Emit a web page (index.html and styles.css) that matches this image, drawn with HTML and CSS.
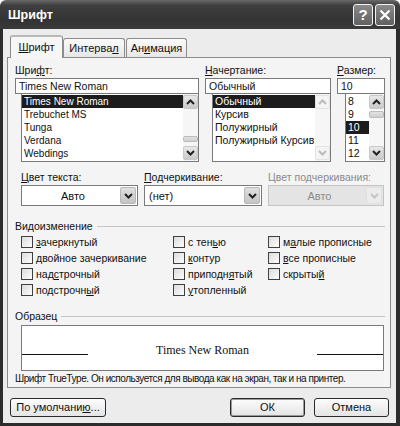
FILE: index.html
```html
<!DOCTYPE html>
<html lang="ru">
<head>
    <meta charset="UTF-8">
    <title>Шрифт</title>
    <link rel="stylesheet" href="styles.css">
</head>
<body>
<div class="window">
    <div class="titlebar">
        <span class="title">Шрифт</span>
        <div class="title-btns">
            <span class="tbtn">?</span>
            <span class="tbtn">
                <svg width="12" height="12" viewBox="0 0 12 12"><path d="M1.5 1.5 L10.5 10.5 M10.5 1.5 L1.5 10.5" stroke="#fff" stroke-width="2.2" fill="none"/></svg>
            </span>
        </div>
    </div>

    <div class="frame">
        <div class="tabs">
            <div class="tab active"><u>Ш</u>рифт</div>
            <div class="tab">Интерва<u>л</u></div>
            <div class="tab tab-last">Ан<u>и</u>мация</div>
        </div>

        <div class="panel">
            <div class="fonts-row">
                <div class="col">
                    <div class="lbl">Шри<u>ф</u>т:</div>
                    <div class="field">Times New Roman</div>
                    <div class="list list-font">
                        <div class="items">
                            <div class="item sel">Times New Roman</div>
                            <div class="item">Trebuchet MS</div>
                            <div class="item">Tunga</div>
                            <div class="item">Verdana</div>
                            <div class="item">Webdings</div>
                        </div>
                        <div class="scroll">
                            <div class="sbtn"><svg width="9" height="6" viewBox="0 0 9 6"><path d="M1 5 L4.5 1.5 L8 5" stroke="#222" stroke-width="2" fill="none"/></svg></div>
                            <div class="track"><div class="thumb thumb-font"></div></div>
                            <div class="sbtn"><svg width="9" height="6" viewBox="0 0 9 6"><path d="M1 1 L4.5 4.5 L8 1" stroke="#222" stroke-width="2" fill="none"/></svg></div>
                        </div>
                    </div>
                </div>
                <div class="col">
                    <div class="lbl"><u>Н</u>ачертание:</div>
                    <div class="field">Обычный</div>
                    <div class="list list-style">
                        <div class="items">
                            <div class="item sel">Обычный</div>
                            <div class="item">Курсив</div>
                            <div class="item">Полужирный</div>
                            <div class="item">Полужирный Курсив</div>
                        </div>
                        <div class="scroll off">
                            <div class="sbtn"><svg width="9" height="6" viewBox="0 0 9 6"><path d="M1 5 L4.5 1.5 L8 5" stroke="#bbb" stroke-width="2" fill="none"/></svg></div>
                            <div class="track"></div>
                            <div class="sbtn"><svg width="9" height="6" viewBox="0 0 9 6"><path d="M1 1 L4.5 4.5 L8 1" stroke="#bbb" stroke-width="2" fill="none"/></svg></div>
                        </div>
                    </div>
                </div>
                <div class="col">
                    <div class="lbl"><u>Р</u>азмер:</div>
                    <div class="field">10</div>
                    <div class="list list-size">
                        <div class="items">
                            <div class="item">8</div>
                            <div class="item">9</div>
                            <div class="item sel">10</div>
                            <div class="item">11</div>
                            <div class="item">12</div>
                        </div>
                        <div class="scroll">
                            <div class="sbtn"><svg width="9" height="6" viewBox="0 0 9 6"><path d="M1 5 L4.5 1.5 L8 5" stroke="#222" stroke-width="2" fill="none"/></svg></div>
                            <div class="track"><div class="thumb thumb-size"></div></div>
                            <div class="sbtn"><svg width="9" height="6" viewBox="0 0 9 6"><path d="M1 1 L4.5 4.5 L8 1" stroke="#222" stroke-width="2" fill="none"/></svg></div>
                        </div>
                    </div>
                </div>
            </div>

            <div class="colors-row">
                <div class="col">
                    <div class="lbl"><u>Ц</u>вет текста:</div>
                    <div class="combo">
                        <span class="combo-text center">Авто</span>
                        <span class="combo-btn"><svg width="9" height="6" viewBox="0 0 9 6"><path d="M1 1 L4.5 4.5 L8 1" stroke="#222" stroke-width="2" fill="none"/></svg></span>
                    </div>
                </div>
                <div class="col">
                    <div class="lbl"><u>П</u>одчеркивание:</div>
                    <div class="combo">
                        <span class="combo-text">(нет)</span>
                        <span class="combo-btn"><svg width="9" height="6" viewBox="0 0 9 6"><path d="M1 1 L4.5 4.5 L8 1" stroke="#222" stroke-width="2" fill="none"/></svg></span>
                    </div>
                </div>
                <div class="col">
                    <div class="lbl dim">Цвет подчеркивания:</div>
                    <div class="combo disabled">
                        <span class="combo-text center">Авто</span>
                        <span class="combo-btn"><svg width="9" height="6" viewBox="0 0 9 6"><path d="M1 1 L4.5 4.5 L8 1" stroke="#c4c4c4" stroke-width="2" fill="none"/></svg></span>
                    </div>
                </div>
            </div>

            <div class="legend legend-effects"><span>Видоизменение</span><i></i></div>
            <div class="checks">
                <label class="chk"><span class="box"></span><span><u>з</u>ачеркнутый</span></label>
                <label class="chk"><span class="box"></span><span>с тен<u>ь</u>ю</span></label>
                <label class="chk"><span class="box"></span><span>м<u>а</u>лые прописные</span></label>
                <label class="chk"><span class="box"></span><span><u>д</u>войное зачеркивание</span></label>
                <label class="chk"><span class="box"></span><span><u>к</u>онтур</span></label>
                <label class="chk"><span class="box"></span><span><u>в</u>се прописные</span></label>
                <label class="chk"><span class="box"></span><span>над<u>с</u>трочный</span></label>
                <label class="chk"><span class="box"></span><span>приподн<u>я</u>тый</span></label>
                <label class="chk"><span class="box"></span><span>скрыты<u>й</u></span></label>
                <label class="chk"><span class="box"></span><span>подстрочн<u>ы</u>й</span></label>
                <label class="chk"><span class="box"></span><span><u>у</u>топленный</span></label>
            </div>

            <div class="legend legend-sample"><span>Образец</span><i></i></div>
            <div class="sample">
                <span class="sample-line"></span>
                <span class="sample-text">Times New Roman</span>
                <span class="sample-line"></span>
            </div>
            <div class="note">Шрифт TrueType. Он используется для вывода как на экран, так и на принтер.</div>
        </div>

        <div class="buttons">
            <div class="btn btn-default-set">По умолчани<u>ю</u>...</div>
            <div class="btn btn-ok">ОК</div>
            <div class="btn">Отмена</div>
        </div>
    </div>
</div>
</body>
</html>
```

FILE: styles.css
```css
* {
    box-sizing: border-box;
}

body {
    margin: 0;
    font-family: "Liberation Sans", Arial, sans-serif;
    font-size: 10.5px;
    color: #111;
    background: #fff;
}

u {
    text-decoration: underline;
    text-underline-offset: 1px;
}

.window {
    width: 400px;
    height: 426px;
    display: flex;
    flex-direction: column;
}

/* title bar */
.titlebar {
    height: 29px;
    flex: none;
    display: flex;
    align-items: center;
    justify-content: space-between;
    padding: 0 5px 0 8px;
    background: linear-gradient(#6a6a6a, #3e3e3e 18%, #333 70%, #3a3a3a);
    border-radius: 6px 6px 0 0;
}

.title {
    color: #fff;
    font-weight: bold;
    font-size: 12.5px;
    padding-top: 1px;
}

.title-btns {
    display: flex;
    gap: 2px;
}

.tbtn {
    width: 20px;
    height: 22px;
    border: 1px solid #f2f2f2;
    border-radius: 3px;
    background: linear-gradient(#8a8a8a, #606060);
    color: #fff;
    font-weight: bold;
    font-size: 15px;
    display: flex;
    align-items: center;
    justify-content: center;
}

/* frame */
.frame {
    flex: 1;
    background: #ececec;
    border-left: 3px solid #2c2c2c;
    border-right: 4px solid #2c2c2c;
    border-bottom: 3px solid #2c2c2c;
    display: flex;
    flex-direction: column;
}

.tabs {
    display: flex;
    align-items: flex-end;
    height: 22px;
    margin-top: 6px;
    padding-left: 7px;
    position: relative;
    z-index: 1;
}

.tab {
    height: 19px;
    width: 62px;
    border: 1px solid #8c8c8c;
    border-bottom: none;
    border-radius: 3px 3px 0 0;
    background: linear-gradient(#fbfbfb, #e6e6e6);
    text-align: center;
    font-size: 11px;
    line-height: 18px;
}

.tab.active {
    height: 23px;
    width: 53px;
    margin-bottom: -1px;
    background: #f6f6f6;
    border-top: 2px solid #b8b8b8;
    line-height: 21px;
}

.tab-last {
    width: 61px;
    margin-left: 1px;
}

.panel {
    height: 331px;
    margin: 0 5px 0 4px;
    border: 1px solid #8c8c8c;
    background: #f4f4f4;
    padding: 5px 5px 0 7px;
}

.lbl {
    height: 14px;
    line-height: 14px;
    margin-bottom: 1px;
}

.dim {
    color: #8a8a8a;
}

/* font lists */
.fonts-row {
    display: grid;
    grid-template-columns: 184px 126px 48px;
    column-gap: 6px;
}

.field {
    height: 16px;
    border: 1px solid #7a7a7a;
    background: #fff;
    padding-left: 3px;
    line-height: 14px;
    font-size: 10.5px;
}

.list {
    height: 68px;
    display: flex;
    border: 1px solid #7a7a7a;
    border-top: none;
    background: #fff;
    font-size: 10.5px;
}

.list-font {
    margin-left: 6px;
}

.list-style {
    margin-left: 7px;
}

.list-size {
    margin-left: 8px;
}

.items {
    flex: 1;
    padding-top: 1px;
}

.item {
    height: 13px;
    line-height: 13px;
    padding-left: 2px;
    white-space: nowrap;
}

.list-font .item {
    font-size: 10px;
}

.item.sel {
    background: #1c1c1c;
    color: #fff;
}

.scroll {
    width: 15px;
    display: flex;
    flex-direction: column;
    padding: 1px 0;
    background: #f6f6f6;
}

.sbtn {
    height: 14px;
    border: 1px solid #c8c8c8;
    border-radius: 2px;
    background: linear-gradient(#e8e8e8, #c9c9c9);
    display: flex;
    align-items: center;
    justify-content: center;
}

.scroll.off .sbtn {
    background: #f4f4f4;
    border-color: #e2e2e2;
}

.track {
    flex: 1;
    display: flex;
    flex-direction: column;
}

.thumb {
    height: 6px;
    border: 1px solid #bcbcbc;
    border-radius: 2px;
    background: linear-gradient(#e2e2e2, #cfcfcf);
}

.thumb-font {
    margin-top: 27px;
}

.thumb-size {
    margin-top: 2px;
    height: 7px;
}

/* colour combos */
.colors-row {
    display: grid;
    grid-template-columns: 117px 118px 116px;
    column-gap: 6px;
    margin: 8px 0 0 6px;
}

.combo {
    height: 21px;
    border: 1px solid #7a7a7a;
    background: #fff;
    display: flex;
    padding: 1px;
    font-size: 11px;
}

.combo-text {
    flex: 1;
    line-height: 18px;
    padding-left: 3px;
}

.combo-text.center {
    text-align: center;
}

.combo-btn {
    width: 16px;
    border: 1px solid #b8b8b8;
    border-radius: 2px;
    background: linear-gradient(#e0e0e0, #c4c4c4);
    display: flex;
    align-items: center;
    justify-content: center;
}

.combo.disabled {
    background: #e4e4e4;
    border-color: #c4c4c4;
    color: #8a8a8a;
}

.combo.disabled .combo-btn {
    background: #ececec;
    border-color: #e0e0e0;
}

/* group headers */
.legend {
    display: flex;
    align-items: center;
    height: 14px;
}

.legend i {
    flex: 1;
    border-top: 1px solid #c6c6c6;
    margin-left: 4px;
}

.legend-effects {
    margin-top: 13px;
}

.legend-sample {
    margin-top: 11px;
}

/* checkboxes */
.checks {
    display: grid;
    grid-template-columns: 152px 95px 1fr;
    grid-auto-rows: 16px;
    margin: 1px 0 0 6px;
    font-size: 10.5px;
}

.chk {
    display: flex;
    align-items: center;
    gap: 3px;
    white-space: nowrap;
}

.box {
    width: 12px;
    height: 12px;
    border: 1px solid #404040;
    background: linear-gradient(135deg, #dcdcdc, #fcfcfc);
}

/* sample */
.sample {
    height: 46px;
    margin: 2px 0 0 6px;
    width: 363px;
    border: 1px solid #7a7a7a;
    background: #fff;
    display: flex;
    justify-content: space-between;
    padding-top: 17px;
}

.sample-line {
    width: 66px;
    height: 12px;
    border-bottom: 1px solid #111;
}

.sample-text {
    font-family: "Liberation Serif", "Times New Roman", serif;
    font-size: 12px;
    line-height: 14px;
}

.note {
    margin-top: 1px;
    line-height: 13px;
    font-size: 10px;
    letter-spacing: -0.45px;
}

/* buttons */
.buttons {
    display: flex;
    margin-top: 10px;
    padding: 0 7px;
    gap: 9px;
}

.btn {
    height: 19px;
    width: 75px;
    border: 1px solid #2a2a2a;
    border-radius: 3px;
    background: linear-gradient(#fdfdfd, #e4e4e4);
    text-align: center;
    line-height: 17px;
    font-size: 11px;
}

.btn-default-set {
    width: 96px;
    margin-right: auto;
}

.btn-ok {
    box-shadow: inset 0 0 0 1px #9a9a9a;
}
```
